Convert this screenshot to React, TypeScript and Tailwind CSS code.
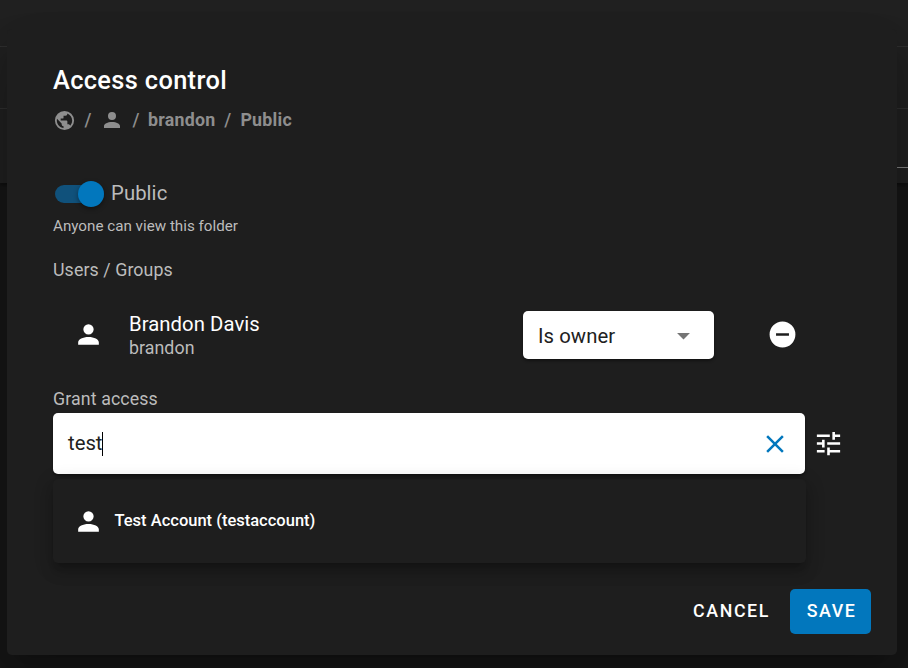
import React from "react";

const paths = {
  earth:
    "M17.9,17.39C17.64,16.59 16.89,16 16,16H15V13A1,1 0 0,0 14,12H8V10H10A1,1 0 0,0 11,9V7H13A2,2 0 0,0 15,5V4.59C17.93,5.77 20,8.64 20,12C20,14.08 19.2,15.97 17.9,17.39M11,19.93C7.05,19.44 4,16.08 4,12C4,11.38 4.08,10.78 4.21,10.21L9,15V16A2,2 0 0,0 11,18M12,2A10,10 0 0,0 2,12A10,10 0 0,0 12,22A10,10 0 0,0 22,12A10,10 0 0,0 12,2Z",
  account:
    "M12,4A4,4 0 0,1 16,8A4,4 0 0,1 12,12A4,4 0 0,1 8,8A4,4 0 0,1 12,4M12,14C16.42,14 20,15.79 20,18V20H4V18C4,15.79 7.58,14 12,14Z",
  minusCircle: "M17,13H7V11H17M12,2A10,10 0 0,0 2,12A10,10 0 0,0 12,22A10,10 0 0,0 22,12A10,10 0 0,0 12,2Z",
  close: "M19,6.41L17.59,5L12,10.59L6.41,5L5,6.41L10.59,12L5,17.59L6.41,19L12,13.41L17.59,19L19,17.59L13.41,12L19,6.41Z",
  tune: "M3,17V19H9V17H3M3,5V7H13V5H3M13,21V19H21V17H13V15H11V21H13M7,9V11H3V13H7V15H9V9H7M21,13V11H11V13H21M15,9H17V7H21V5H17V3H15V9Z",
  menuDown: "M7,10L12,15L17,10H7Z",
};

function Icon({ name, className }: { name: keyof typeof paths; className: string }) {
  return (
    <svg viewBox="0 0 24 24" fill="currentColor" className={`shrink-0 ${className}`}>
      <path d={paths[name]} />
    </svg>
  );
}

function Backdrop() {
  return (
    <div className="absolute inset-0 bg-[#171717]">
      <div className="flex h-[183px] flex-col bg-[#212121] shadow-[0_2px_4px_rgba(0,0,0,0.4)]">
        <div className="h-[47px] border-b border-[#303030]" />
        <div className="h-[62px] border-b border-[#303030]" />
        <div className="ml-[890px] h-[59px] border-b border-[#808080]" />
      </div>
    </div>
  );
}

export default function App() {
  return (
    <div className="relative h-[668px] w-[908px] overflow-hidden bg-[#171717] font-[Roboto,sans-serif] whitespace-nowrap text-white">
      <Backdrop />
      <div className="relative mt-[29px] ml-[7px] flex h-[626px] w-[890px] flex-col rounded-[5px] bg-[#1e1e1e] pr-[26px] pl-[46px] shadow-[0_14px_19px_-9px_rgba(0,0,0,0.2),0_30px_48px_4px_rgba(0,0,0,0.14),0_11px_58px_10px_rgba(0,0,0,0.12)]">
        <h1 className="mt-[35px] h-8 text-[25.4px] leading-8 font-medium tracking-[0.0135em]">Access control</h1>

        <nav className="mt-[12px] flex h-6 items-center text-[17.8px] font-bold tracking-[0.0135em] text-[#8e8e8e]">
          <Icon name="earth" className="size-[23px]" />
          <span className="w-[24px] text-center font-medium">/</span>
          <Icon name="account" className="size-[24px]" />
          <span className="w-[24px] text-center font-medium">/</span>
          <span>brandon</span>
          <span className="w-[25px] text-center font-medium">/</span>
          <span>Public</span>
        </nav>

        <div className="mt-[47px] flex h-[30px] items-center">
          <div className="ml-[2px] flex h-[18px] w-[49px] items-center justify-end rounded-full bg-[#10517b]">
            <div className="size-[26px] rounded-full bg-[#0277bd] shadow-[0_2px_5px_rgba(0,0,0,0.4)]" />
          </div>
          <span className="ml-[7px] pb-[2px] text-[20.3px] tracking-[0.004em] text-[#bcbcbc]">Public</span>
        </div>
        <p className="mt-[7px] h-5 text-[15.2px] leading-5 text-[#bcbcbc]">Anyone can view this folder</p>
        <p className="mt-[22px] h-6 text-[17.8px] leading-6 tracking-[0.005em] text-[#bcbcbc]">Users / Groups</p>

        <div className="mt-[29px] flex h-12 items-center">
          <Icon name="account" className="mb-[2px] ml-[20px] size-[31px]" />
          <div className="ml-[25px] flex w-[395px] flex-col">
            <span className="h-[25px] text-[20.3px] leading-[27px] tracking-[0.003em]">Brandon Davis</span>
            <span className="h-[23px] text-[17.8px] leading-6 tracking-[0.003em] text-[#bcbcbc]">brandon</span>
          </div>
          <div className="-ml-px flex h-12 w-[191px] items-center rounded-[5px] bg-white pr-[15px] pl-[15px] shadow-[0_2px_3px_rgba(0,0,0,0.4)]">
            <span className="flex-1 pt-[2px] text-[20.3px] tracking-[0.003em] text-[#212121]">Is owner</span>
            <Icon name="menuDown" className="size-[31px] text-[#757575]" />
          </div>
          <Icon name="minusCircle" className="mb-px ml-[53px] size-[31px]" />
        </div>

        <p className="mt-[28px] h-6 text-[17.8px] leading-6 tracking-[0.006em] text-[#bcbcbc]">Grant access</p>
        <div className="mt-[2px] flex h-[61px] items-center">
          <div className="flex h-[61px] w-[752px] items-center rounded-[5px] bg-white pr-[15px] pl-[15px] shadow-[0_2px_3px_rgba(0,0,0,0.4)]">
            <span className="text-[20.3px] text-[#212121]">test</span>
            <span className="-ml-px h-[24px] w-px bg-black" />
            <Icon name="close" className="ml-auto size-[30px] text-[#0277bd]" />
          </div>
          <Icon name="tune" className="ml-[7.5px] size-[31px]" />
        </div>

        <div className="relative mt-[5px] flex h-[84px] w-[753px] items-center rounded-[5px] bg-[#1e1e1e] pl-[20px] shadow-[0_6px_6px_-4px_rgba(0,0,0,0.2),0_10px_13px_1px_rgba(0,0,0,0.14),0_4px_18px_3px_rgba(0,0,0,0.12)]">
          <Icon name="account" className="size-[31px]" />
          <span className="ml-[10.5px] text-[16.5px] font-medium">Test Account (testaccount)</span>
        </div>

        <div className="mt-[26px] flex h-[45px] justify-end text-[17.8px] font-medium tracking-[0.0893em]">
          <button className="w-[119px] pl-[2px]">CANCEL</button>
          <button className="w-[81px] rounded-[5px] bg-[#0277bd] pl-[2px]">SAVE</button>
        </div>
      </div>
    </div>
  );
}
